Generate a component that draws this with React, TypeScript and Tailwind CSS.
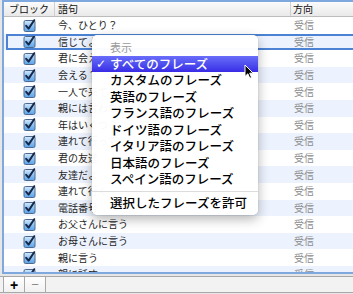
import React from "react";

const rows = [
  "今、ひとり？",
  "信じてよ",
  "君に会えない",
  "会える？",
  "一人で来て",
  "親には言わない",
  "年はいくつ？",
  "連れて行って",
  "君の友達",
  "友達だよ",
  "連れて行く",
  "電話番号",
  "お父さんに言う",
  "お母さんに言う",
  "親に言う",
  "親に話す",
];

const menuItems = [
  "カスタムのフレーズ",
  "英語のフレーズ",
  "フランス語のフレーズ",
  "ドイツ語のフレーズ",
  "イタリア語のフレーズ",
  "日本語のフレーズ",
  "スペイン語のフレーズ",
];

function Check() {
  return (
    <svg width="13" height="13" viewBox="0 0 13 13">
      <defs>
        <linearGradient id="cbg" x1="0" y1="0" x2="0" y2="1">
          <stop offset="0" stopColor="#d4e9fc" />
          <stop offset="0.5" stopColor="#8ec2f2" />
          <stop offset="1" stopColor="#5aa2ea" />
        </linearGradient>
      </defs>
      <rect x="1" y="1.5" width="11" height="11" rx="1.5" fill="url(#cbg)" stroke="#4d6a8e" strokeWidth="1" />
      <path d="M3.2 6.8 L5.6 9.6 L11.2 1.2" fill="none" stroke="#16284a" strokeWidth="2" strokeLinecap="round" strokeLinejoin="round" />
    </svg>
  );
}

export default function App() {
  return (
    <div className="relative w-[353px] h-[294px] overflow-hidden bg-[#e6e6e6] font-['Noto_Sans_CJK_JP',sans-serif]">
      <div className="ml-[2px] h-[274px] border-t-2 border-l-2 border-b-2 border-[#7fa9de] bg-white flex flex-col overflow-hidden">
        {/* header */}
        <div className="h-[15px] shrink-0 flex items-center bg-gradient-to-b from-[#fbfbfb] to-[#e9e9e9] border-b border-[#bcbcbc] text-[10px] leading-none text-[#111]">
          <div className="w-[51px] h-full flex items-center justify-center border-r border-[#cfcfcf]">ブロック</div>
          <div className="w-[236px] h-full flex items-center pl-[3px] border-r border-[#cfcfcf]">語句</div>
          <div className="flex-1 h-full flex items-center pl-[2px]">方向</div>
        </div>
        {/* rows */}
        <div className="flex-1 overflow-hidden">
          {rows.map((t, i) => (
            <div
              key={i}
              className={
                "relative h-[16.6px] flex items-center text-[10px] leading-none " +
                (i % 2 === 1 ? "bg-[#edf3fe]" : "bg-white")
              }
            >
              <div className="w-[51px] flex justify-center">
                <Check />
              </div>
              <div className="w-[237px] pl-[3px] text-[#1e1e1e]">{t}</div>
              <div className="flex-1 pl-[2px] text-[#8c8c8c]">受信</div>
              {i === 1 && (
                <div className="absolute left-[2px] right-[-4px] top-[0.5px] bottom-0 border-2 border-[#4b82d4]" />
              )}
            </div>
          ))}
        </div>
      </div>
      {/* bottom bar */}
      <div className="flex items-stretch h-[20px] pt-[2px]">
        <div className="flex-1 flex border-t border-b border-[#a8a8a8] bg-[#f2f2f2] h-[17px]">
          <div className="w-[22px] ml-[3px] border-l border-r border-[#a8a8a8] bg-gradient-to-b from-white to-[#f1f1f1] flex items-center justify-center text-[14px] font-bold leading-none text-black font-['Liberation_Sans',sans-serif]">+</div>
          <div className="w-[21px] border-r border-[#a8a8a8] bg-gradient-to-b from-white to-[#f1f1f1] flex items-center justify-center text-[13px] leading-none text-[#8a8a8a] font-['Liberation_Sans',sans-serif]">−</div>
          <div className="flex-1" />
        </div>
      </div>

      {/* popup menu */}
      <div className="absolute left-[92px] top-[35px] w-[166px] rounded-[5px] bg-white/[0.97] shadow-[0_4px_12px_rgba(0,0,0,0.3),0_0_1px_rgba(0,0,0,0.3)] py-[4px] font-medium">
        <div className="h-[16.5px] flex items-center pl-[18px] text-[11px] leading-none text-[#9a9a9a] font-normal">表示</div>
        <div className="h-[16.5px] flex items-center bg-gradient-to-b from-[#6a6cf9] to-[#3a29e6] text-white text-[12.5px] leading-none">
          <span className="w-[18px] pl-[4px] text-[12px] font-['DejaVu_Sans',sans-serif]">✓</span>
          <span>すべてのフレーズ</span>
        </div>
        {menuItems.map((m) => (
          <div key={m} className="h-[16.5px] flex items-center pl-[18px] text-[12.5px] leading-none text-black">
            {m}
          </div>
        ))}
        <div className="h-[7px] flex items-center">
          <div className="w-full h-px bg-[#dcdcdc]" />
        </div>
        <div className="h-[16.5px] flex items-center pl-[18px] text-[12.5px] leading-none text-black">選択したフレーズを許可</div>
      </div>

      {/* cursor */}
      <svg className="absolute left-[244px] top-[64px]" width="11" height="16" viewBox="0 0 11 16">
        <path d="M1 1 L1 12.5 L3.8 9.8 L5.8 14.3 L7.6 13.5 L5.7 9.2 L9.2 9.2 Z" fill="#000" stroke="#fff" strokeWidth="1" strokeLinejoin="round" />
      </svg>
    </div>
  );
}
